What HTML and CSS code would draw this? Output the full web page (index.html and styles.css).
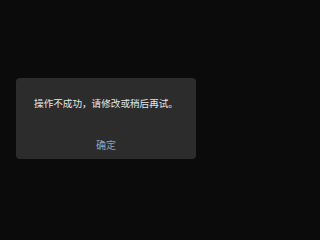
FILE: index.html
```html
<!DOCTYPE html>
<html>
<head>
<meta charset="utf-8">
<link rel="stylesheet" href="styles.css">
</head>
<body>
<div class="screen">
  <div class="dialog">
    <div class="message">操作不成功，请修改或稍后再试。</div>
    <div class="actions"><span class="ok">确定</span></div>
  </div>
</div>
</body>
</html>
```
FILE: styles.css
```css
html, body {
  margin: 0;
  padding: 0;
  background: #0b0b0b;
}
.screen {
  width: 220px;
  height: 229px;
  padding-top: 78px;
  padding-left: 16px;
  box-sizing: border-box;
}
.dialog {
  width: 180px;
  height: 81px;
  background: #2c2c2c;
  border-radius: 4px;
  display: flex;
  flex-direction: column;
  align-items: center;
  font-family: "Noto Sans CJK SC", "Noto Sans", sans-serif;
}
.message {
  margin-top: 18px;
  font-size: 9.6px;
  line-height: 14px;
  color: #e6e6e6;
  white-space: nowrap;
}
.actions {
  margin-top: 25px;
  line-height: 14px;
}
.ok {
  font-size: 10px;
  color: #8da3bd;
}
```
